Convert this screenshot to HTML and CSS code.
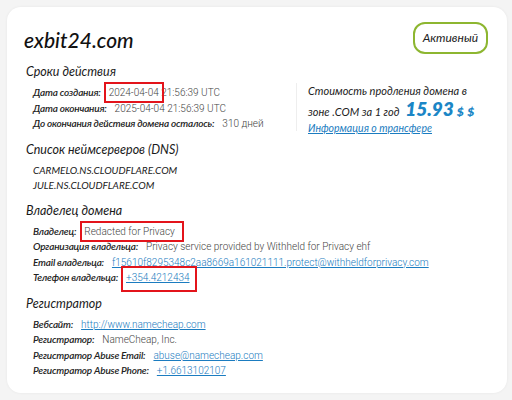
FILE: index.html
```html
<!DOCTYPE html>
<html lang="ru">
<head>
<meta charset="utf-8">
<link rel="stylesheet" href="styles.css">
</head>
<body>
<div class="card">
  <div class="header">
    <h1 class="domain">exbit24.com</h1>
    <span class="badge">Активный</span>
  </div>

  <div class="top">
    <div class="section first">
      <h2 class="sec-title">Сроки действия</h2>
      <div class="row"><span class="label">Дата создания:</span><span class="value"><span class="mark mark-date">2024-04-04</span> 21:56:39 UTC</span></div>
      <div class="row"><span class="label">Дата окончания:</span><span class="value">2025-04-04 21:56:39 UTC</span></div>
      <div class="row"><span class="label">До окончания действия домена осталось:</span><span class="value">310 дней</span></div>
    </div>
    <div class="price">
      <div class="price-text">Стоимость продления домена в</div>
      <div class="price-line">зоне .COM за 1 год <span class="amount">15.93</span><span class="cur">$ $</span></div>
      <a class="link small" href="#">Информация о трансфере</a>
    </div>
  </div>

  <div class="section">
    <h2 class="sec-title">Список неймсерверов (DNS)</h2>
    <div class="ns">CARMELO.NS.CLOUDFLARE.COM</div>
    <div class="ns">JULE.NS.CLOUDFLARE.COM</div>
  </div>

  <div class="section">
    <h2 class="sec-title">Владелец домена</h2>
    <div class="row"><span class="label">Владелец:</span><span class="value"><span class="mark mark-owner">Redacted for Privacy</span></span></div>
    <div class="row"><span class="label">Организация владельца:</span><span class="value">Privacy service provided by Withheld for Privacy ehf</span></div>
    <div class="row"><span class="label">Email владельца:</span><a class="link" href="#">f15610f8295348c2aa8669a161021111.protect@withheldforprivacy.com</a></div>
    <div class="row"><span class="label">Телефон владельца:</span><span class="mark mark-phone"><a class="link" href="#">+354.4212434</a></span></div>
  </div>

  <div class="section">
    <h2 class="sec-title">Регистратор</h2>
    <div class="row"><span class="label">Вебсайт:</span><a class="link" href="#">http://www.namecheap.com</a></div>
    <div class="row"><span class="label">Регистратор:</span><span class="value">NameCheap, Inc.</span></div>
    <div class="row"><span class="label">Регистратор Abuse Email:</span><a class="link" href="#">abuse@namecheap.com</a></div>
    <div class="row"><span class="label">Регистратор Abuse Phone:</span><a class="link" href="#">+1.6613102107</a></div>
  </div>
</div>
</body>
</html>
```

FILE: styles.css
```css
html, body {
  margin: 0;
  padding: 0;
  background: #f4f4f4;
}
body {
  font-family: Lato, "Open Sans", sans-serif;
  color: #222;
  padding: 7px 5px 7px 7px;
}
.card {
  background: #fff;
  border-radius: 14px;
  box-shadow: 0 0 3px rgba(0,0,0,0.06);
  padding: 15px 19px 0 17px;
  height: 371px;
}
.header {
  display: flex;
  justify-content: space-between;
  align-items: center;
  height: 32px;
}
.domain {
  margin: 0;
  font-family: Lato, sans-serif;
  font-style: italic;
  font-weight: 500;
  font-size: 21px;
  line-height: 28px;
  color: #111;
  padding-top: 3px;
}
.badge {
  border: 2px solid #8db630;
  border-radius: 12px;
  padding: 0 8px;
  height: 28px;
  line-height: 28px;
  font-style: italic;
  font-size: 12px;
  color: #222;
}
.top {
  display: flex;
  margin-top: 9px;
}
.top .section {
  width: 270px;
}
.price {
  border-left: 1px solid #eee;
  padding: 0 0 0 11px;
  margin-top: 20px;
  height: 48px;
}
.price-text, .price-line {
  font-style: italic;
  font-size: 11px;
  color: #222;
}
.price-text {
  line-height: 16px;
}
.price-line {
  line-height: 20px;
}
.amount {
  font-size: 19px;
  font-weight: 800;
  color: #1b86c6;
  margin-left: 3px;
}
.cur {
  font-size: 12px;
  font-weight: 800;
  color: #1b86c6;
  margin-left: 3px;
  letter-spacing: 0.5px;
}
.section {
  padding-left: 2px;
}
.sec-title {
  margin: 0 0 4px;
  font-weight: 400;
  font-style: italic;
  font-size: 12.5px;
  line-height: 18px;
  color: #1a1a1a;
}
.section + .section,
.top + .section {
  margin-top: 9px;
}
.row {
  display: block;
  padding-left: 7px;
  font-size: 10px;
  height: 15.5px;
  line-height: 15.5px;
  white-space: nowrap;
}
.label {
  font-style: italic;
  font-weight: 600;
  letter-spacing: -0.2px;
  color: #222;
  margin-right: 8px;
}
.value {
  font-family: Roboto, "Noto Sans", sans-serif;
  font-weight: 300;
  color: #444;
}
.link {
  font-family: Roboto, "Noto Sans", sans-serif;
  font-weight: 300;
  color: #1b7cc0;
  text-decoration: underline;
}
.link.small {
  font-family: Lato, sans-serif;
  font-style: italic;
  font-weight: 400;
  font-size: 10.5px;
  display: block;
  line-height: 12px;
}
.ns {
  padding-left: 7px;
  font-style: italic;
  font-size: 10px;
  height: 15px;
  line-height: 15px;
  color: #222;
}
.mark {
  outline: 2px solid #e3141b;
}
.mark-date {
  padding: 3px 3px;
  margin: 0 -3px;
}
.mark-owner {
  padding: 3px 7px 3px 2px;
  margin: 0 -7px 0 -2px;
}
.mark-phone {
  padding: 3px 5px 7px 3px;
  margin: 0 -5px 0 -3px;
}
```
